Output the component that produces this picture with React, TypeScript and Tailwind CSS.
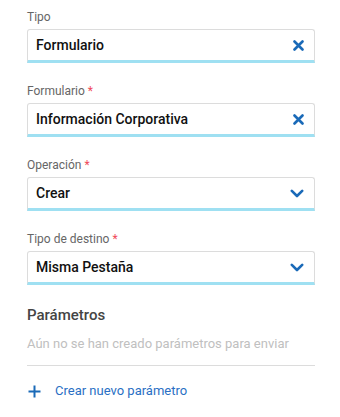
import React from "react";

function XIcon() {
  return (
    <svg width="11" height="11" viewBox="0 0 11 11">
      <path d="M1.5 1.5 L9.5 9.5 M9.5 1.5 L1.5 9.5" stroke="#1a6ab8" strokeWidth="2.6" strokeLinecap="round" />
    </svg>
  );
}

function Chevron() {
  return (
    <svg width="14" height="9" viewBox="0 0 14 9">
      <path d="M1.8 1.8 L7 7 L12.2 1.8" stroke="#1a6ab8" strokeWidth="2.6" fill="none" strokeLinecap="round" strokeLinejoin="round" />
    </svg>
  );
}

function Field({ label, value, required, icon }: { label: string; value: string; required?: boolean; icon: "x" | "chev" }) {
  return (
    <div className="flex flex-col">
      <div className="text-[12px] leading-4 text-[#666] h-4">
        {label}
        {required && <span className="text-[#f04a5a] ml-[3px]">*</span>}
      </div>
      <div className="mt-[4px] h-[34px] flex items-center justify-between border border-[#dcdcdc] border-b-[3px] border-b-[#9fe0f2] rounded-t-[3px] bg-white pl-[8px] pr-[10px]">
        <span className="text-[14px] font-medium text-[#111]">{value}</span>
        {icon === "x" ? <XIcon /> : <Chevron />}
      </div>
    </div>
  );
}

export default function App() {
  return (
    <div className="w-[340px] h-[417px] bg-white px-[27px] pt-[9px]" style={{ fontFamily: "Roboto, sans-serif" }}>
      <div className="w-[288px] flex flex-col gap-[20px]">
        <Field label="Tipo" value="Formulario" icon="x" />
        <Field label="Formulario" value="Información Corporativa" required icon="x" />
        <Field label="Operación" value="Crear" required icon="chev" />
        <Field label="Tipo de destino" value="Misma Pestaña" required icon="chev" />
      </div>
      <div className="w-[288px] mt-[21px]">
        <div className="text-[15px] leading-[18px] font-medium text-[#444]">Parámetros</div>
        <div className="mt-[12px] text-[13px] leading-4 text-[#c0c0c0]">Aún no se han creado parámetros para enviar</div>
        <div className="mt-[13px] border-t border-[#dcdcdc]"></div>
        <div className="mt-[17px] flex items-center text-[13px] leading-4 text-[#2a6fc4]">
          <svg width="13" height="13" viewBox="0 0 13 13" className="ml-[1px]">
            <path d="M6.5 0.5 V12.5 M0.5 6.5 H12.5" stroke="#1a6ab8" strokeWidth="2" />
          </svg>
          <span className="ml-[14px]">Crear nuevo parámetro</span>
        </div>
      </div>
    </div>
  );
}
